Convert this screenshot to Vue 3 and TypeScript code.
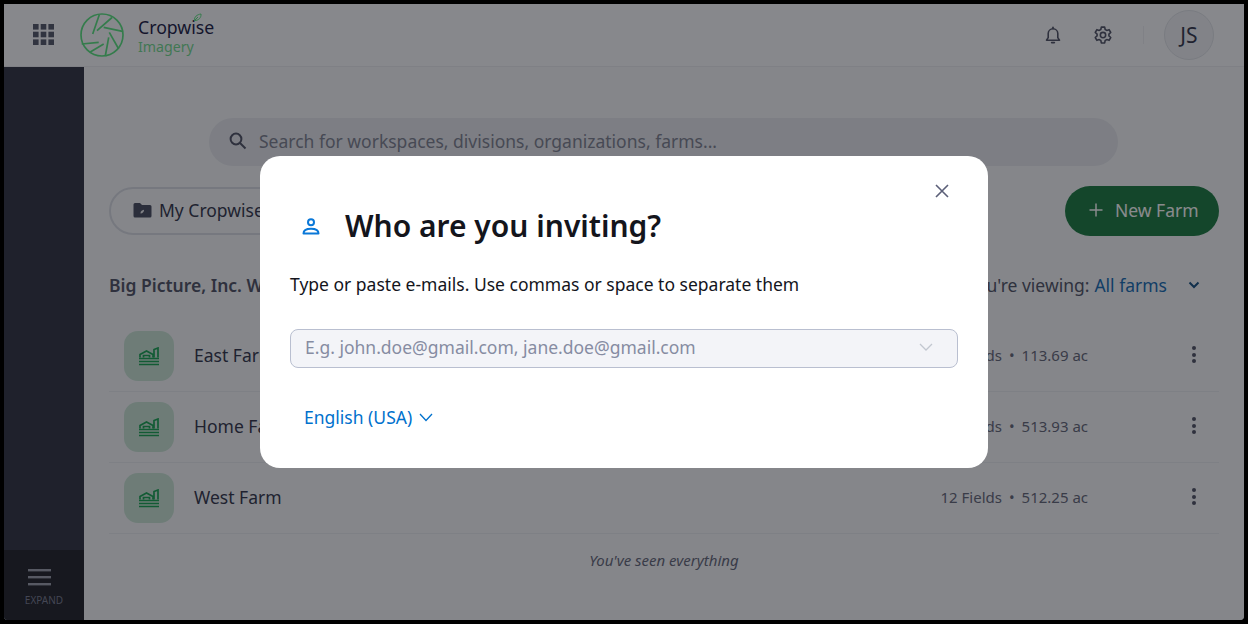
<template>
  <div class="frame">
    <div class="page">
      <header class="topbar">
        <svg class="apps" width="22" height="22" viewBox="0 0 22 22">
          <template v-for="r in 3" :key="r">
            <rect v-for="c in 3" :key="c" :x="(c - 1) * 7.7" :y="(r - 1) * 7.7" width="5.6" height="5.6" fill="#4f5264" />
          </template>
        </svg>
        <svg class="logo" width="44" height="44" viewBox="0 0 44 44" fill="none" stroke="#55e27c" stroke-width="1.7">
          <circle cx="22" cy="22" r="21" />
          <line v-for="(b, i) in blades" :key="i" :x1="b[0]" :y1="b[1]" :x2="b[2]" :y2="b[3]" />
        </svg>
        <div class="brand">
          <div class="brand-name">
            Cropwise
            <svg class="leaf" width="9" height="9" viewBox="0 0 9 9" fill="none" stroke="#55e27c" stroke-width="1">
              <path d="M1.5 7.5C1 4 4 1.5 8 1c.3 3.500-2 6.500-6.500 6.500zM1.500 7.500L5 4" />
            </svg>
          </div>
          <div class="brand-sub">Imagery</div>
        </div>
        <div class="top-right">
          <svg width="20" height="20" viewBox="0 0 20 20" fill="none" stroke="#4a4d60" stroke-width="1.6">
            <path d="M3.500 15.200h13l-1.700-2.600V8.600a4.800 4.800 0 0 0-9.600 0v4z" stroke-linejoin="round" />
            <path d="M8.600 17.600h2.800" stroke-linecap="round" />
            <path d="M10 2.200v1.400" stroke-linecap="round" />
          </svg>
          <svg class="gear" width="20" height="20" viewBox="0 0 24 24" fill="none" stroke="#4a4d60" stroke-width="1.9" stroke-linejoin="round">
            <circle cx="12" cy="12" r="3.200" />
            <path d="M10 2.500h4l.6 2.900 1.900 1.100 2.800-.9 2 3.400-2.200 2v2l2.200 2-2 3.400-2.800-.9-1.900 1.100-.6 2.900h-4l-.6-2.900-1.900-1.100-2.800.9-2-3.400 2.200-2v-2l-2.200-2 2-3.400 2.800.9 1.900-1.100z" />
          </svg>
          <span class="divider"></span>
          <div class="avatar">JS</div>
        </div>
      </header>

      <div class="body">
        <aside class="sidebar">
          <div class="expand">
            <svg class="burger" width="23" height="17" viewBox="0 0 23 17" fill="#9a9daa">
              <rect y="0" width="23" height="2.400" />
              <rect y="7" width="23" height="2.400" />
              <rect y="14" width="23" height="2.400" />
            </svg>
            <span>EXPAND</span>
          </div>
        </aside>

        <main class="main">
          <div class="search">
            <svg width="20" height="20" viewBox="0 0 20 20" fill="none" stroke="#4a4d60" stroke-width="2">
              <circle cx="8" cy="8" r="5.400" />
              <path d="M12 12l5.500 5.500" />
            </svg>
            <span>Search for workspaces, divisions, organizations, farms...</span>
          </div>

          <div class="actions">
            <div class="crumb-pill">
              <svg width="19" height="16" viewBox="0 0 19 16">
                <path d="M.5 2.500A1.500 1.500 0 0 1 2 1h5l2 2h8a1.500 1.500 0 0 1 1.500 1.500V14a1.500 1.500 0 0 1-1.500 1.500H2A1.500 1.500 0 0 1 .5 14z" fill="#43465a" />
                <path d="M7.500 11.500c-.3-2 1.400-3.500 3.500-3.700.1 2-1.200 3.700-3.500 3.700z" fill="#f0f0f2" />
              </svg>
              <span>My Cropwise</span>
            </div>
            <div class="new-farm">
              <svg width="16" height="16" viewBox="0 0 16 16" stroke="#fff" stroke-width="1.500">
                <path d="M8 1.500v13M1.500 8h13" />
              </svg>
              <span>New Farm</span>
            </div>
          </div>

          <div class="list-head">
            <span class="org">Big Picture, Inc. Workspace</span>
            <div class="viewing">
              <span>You're viewing:</span>
              <span class="all">All farms</span>
              <svg width="12" height="8" viewBox="0 0 12 8" fill="none" stroke="#0f4a7c" stroke-width="2">
                <path d="M1.500 1.500L6 6l4.500-4.500" />
              </svg>
            </div>
          </div>

          <div v-for="farm in farms" :key="farm.name" class="farm-row">
            <div class="farm-icon">
              <svg width="20" height="19" viewBox="0 0 20 19" fill="none" stroke="#10a04c" stroke-width="1.700">
                <path d="M1 10.500V7.500L7.500 4l6.500 3.500v3" />
                <path d="M4.500 10.500V8.500h6v2" />
                <path d="M15 10.500V2.500L19 1v9.500" />
                <path d="M0 11.500h20M0 14.500h20M0 17.500h20" />
              </svg>
            </div>
            <span class="farm-name">{{ farm.name }}</span>
            <span class="farm-meta">{{ farm.fields }} Fields<i>•</i>{{ farm.area }} ac</span>
            <div class="kebab"><b></b><b></b><b></b></div>
          </div>

          <p class="seen">You've seen everything</p>
        </main>
      </div>

      <div class="overlay"></div>

      <div class="modal">
        <div class="modal-close">
          <svg width="14" height="14" viewBox="0 0 14 14" stroke="#5b5f78" stroke-width="1.600">
            <path d="M1 1l12 12M13 1L1 13" />
          </svg>
        </div>
        <div class="modal-title">
          <svg width="18" height="17" viewBox="0 0 18 17" fill="none" stroke="#0a78d8" stroke-width="2">
            <circle cx="9" cy="4.200" r="3" />
            <path d="M1.500 15.500c0-3 2.800-4.700 7.500-4.700s7.500 1.700 7.500 4.700z" stroke-linejoin="round" />
          </svg>
          <h2>Who are you inviting?</h2>
        </div>
        <p class="modal-hint">Type or paste e-mails. Use commas or space to separate them</p>
        <div class="email-input">
          <span>E.g. john.doe@gmail.com, jane.doe@gmail.com</span>
          <svg width="14" height="8" viewBox="0 0 14 8" fill="none" stroke="#c2c7d0" stroke-width="1.300">
            <path d="M1 1l6 6 6-6" />
          </svg>
        </div>
        <div class="lang">
          <span>English (USA)</span>
          <svg width="14" height="9" viewBox="0 0 14 9" fill="none" stroke="#0071cd" stroke-width="1.300">
            <path d="M1 1l6 6.500L13 1" />
          </svg>
        </div>
      </div>
    </div>
  </div>
</template>

<script setup lang="ts">
const farms = [
  { name: 'East Farm', fields: 3, area: '113.69' },
  { name: 'Home Farm', fields: 10, area: '513.93' },
  { name: 'West Farm', fields: 12, area: '512.25' },
];

// aperture blades of the logo: rim point to inner end, traced from the reference
const blades = [
  [19.3, 1.7, 12.7, 21],
  [32, 4.5, 17, 17.7],
  [42.5, 18.3, 23.7, 14.3],
  [38.7, 36, 29.3, 19.3],
  [25.3, 43, 28.7, 24.3],
  [10.3, 39, 23.7, 31],
  [1.7, 31, 18.7, 29.3],
];
</script>

<style>
html, body { margin: 0; background: #000; }
</style>

<style scoped>
.frame {
  width: 1248px;
  height: 624px;
  padding: 4px;
  box-sizing: border-box;
  background: #000;
  font-family: "Noto Sans", sans-serif;
  overflow: hidden;
}
.page {
  position: relative;
  width: 1240px;
  height: 616px;
  background: #f6f7f9;
  border-radius: 0 0 4px 4px;
  overflow: hidden;
  display: flex;
  flex-direction: column;
}
.topbar {
  height: 63px;
  flex-shrink: 0;
  box-sizing: border-box;
  display: flex;
  align-items: center;
  padding-left: 29px;
  background: #fbfbfc;
  border-bottom: 1px solid #eaebee;
}
.logo { margin-left: 25px; }
.brand { margin-left: 14px; margin-top: 1px; }
.brand-name {
  position: relative;
  font-size: 17.7px;
  line-height: 22px;
  color: #14153f;
}
.leaf { position: absolute; left: 55px; top: -3px; }
.brand-sub { font-size: 14.2px; line-height: 18px; color: #6fd98c; }
.top-right { margin-left: auto; display: flex; align-items: center; padding-right: 30px; }
.gear { margin-left: 30px; }
.divider { width: 1px; height: 18px; background: #ecedf0; margin: 0 20px 0 30px; }
.avatar {
  width: 50px;
  height: 50px;
  box-sizing: border-box;
  border-radius: 50%;
  border: 1px solid #dfe1e6;
  background: #f0f1f5;
  color: #2c2f45;
  font-size: 21px;
  display: flex;
  align-items: center;
  justify-content: center;
}
.body { flex: 1; display: flex; min-height: 0; }
.sidebar {
  width: 80px;
  flex-shrink: 0;
  background: #2a2d3d;
  display: flex;
  flex-direction: column;
  justify-content: flex-end;
}
.expand {
  height: 70px;
  box-sizing: border-box;
  padding-top: 19px;
  background: #1a1b22;
  display: flex;
  flex-direction: column;
  align-items: center;
  gap: 9px;
  color: #74768c;
  font-size: 10px;
  line-height: 11px;
}
.burger { margin-right: 10px; }
.main { flex: 1; min-width: 0; padding: 51px 25px 0; box-sizing: border-box; }
.search {
  width: 909px;
  height: 48px;
  box-sizing: border-box;
  margin-left: 100px;
  border-radius: 24px;
  background: #e6e7ec;
  display: flex;
  align-items: center;
  gap: 11px;
  padding: 0 0 2px 19px;
  font-size: 17.5px;
  color: #7a7d8c;
}
.actions {
  margin-top: 20px;
  display: flex;
  align-items: center;
  justify-content: space-between;
}
.crumb-pill {
  height: 48px;
  width: 220px;
  box-sizing: border-box;
  border: 2px solid #d9dbe2;
  border-radius: 24px;
  display: flex;
  align-items: center;
  gap: 7px;
  padding: 0 0 2px 22px;
  font-size: 17.5px;
  color: #2c2f45;
}
.new-farm {
  width: 154px;
  height: 50px;
  border-radius: 25px;
  background: #14773a;
  color: #fff;
  display: flex;
  align-items: center;
  gap: 11px;
  padding: 0 0 2px 23px;
  box-sizing: border-box;
  font-size: 17.5px;
}
.list-head {
  margin-top: 36px;
  height: 26px;
  display: flex;
  align-items: center;
  justify-content: space-between;
  padding-right: 19px;
  font-size: 17.5px;
  color: #4a4d60;
}
.org { font-weight: 600; }
.viewing { display: flex; align-items: center; }
.all { color: #0f67b1; margin-left: 5px; margin-right: 21px; }
.farm-row {
  height: 71px;
  box-sizing: border-box;
  border-bottom: 1px solid #e9eaee;
  display: flex;
  align-items: center;
  padding-left: 15px;
  padding-right: 19px;
}
.list-head + .farm-row { margin-top: 23px; }
.farm-icon {
  width: 50px;
  height: 50px;
  border-radius: 14px;
  background: #c8e3d3;
  display: flex;
  align-items: center;
  justify-content: center;
  flex-shrink: 0;
}
.farm-name { margin: 0 0 2px 20px; font-size: 17.5px; color: #2c2f45; }
.farm-meta {
  margin: 0 100px 2px auto;
  font-size: 15px;
  color: #5f6274;
}
.farm-meta i { font-style: normal; margin: 0 7px; }
.kebab {
  width: 12px;
  margin-bottom: 3px;
  display: flex;
  flex-direction: column;
  align-items: center;
  gap: 2.5px;
}
.kebab b { width: 4px; height: 4px; border-radius: 50%; background: #4a4d60; }
.seen {
  margin: 16px 0 0;
  text-align: center;
  font-size: 15px;
  font-style: italic;
  color: #5f6274;
}
.overlay {
  position: absolute;
  inset: 0;
  background: rgba(20, 21, 28, 0.5);
}
.modal {
  position: absolute;
  left: 256px;
  top: 152px;
  width: 728px;
  height: 312px;
  box-sizing: border-box;
  padding: 54px 30px 0;
  border-radius: 20px;
  background: #fff;
}
.modal-close { position: absolute; right: 39px; top: 28px; line-height: 0; }
.modal-title { display: flex; align-items: center; height: 32px; }
.modal-title svg { margin-left: 12px; }
.modal-title h2 {
  margin: 0 0 0 25px;
  font-size: 30px;
  font-weight: 600;
  line-height: 32px;
  color: #14151c;
}
.modal-hint { margin: 30px 0 0; font-size: 17.5px; line-height: 24px; color: #14151c; }
.email-input {
  margin-top: 33px;
  height: 39px;
  box-sizing: border-box;
  border: 1px solid #b9bfd0;
  border-radius: 8px;
  background: #f3f4f8;
  display: flex;
  align-items: center;
  justify-content: space-between;
  padding: 0 24px 3px 14px;
  font-size: 17.5px;
  color: #868ca2;
}
.lang {
  margin-top: 37px;
  margin-left: 14px;
  display: flex;
  align-items: center;
  gap: 7px;
  font-size: 17.5px;
  line-height: 24px;
  color: #0071cd;
}
</style>
